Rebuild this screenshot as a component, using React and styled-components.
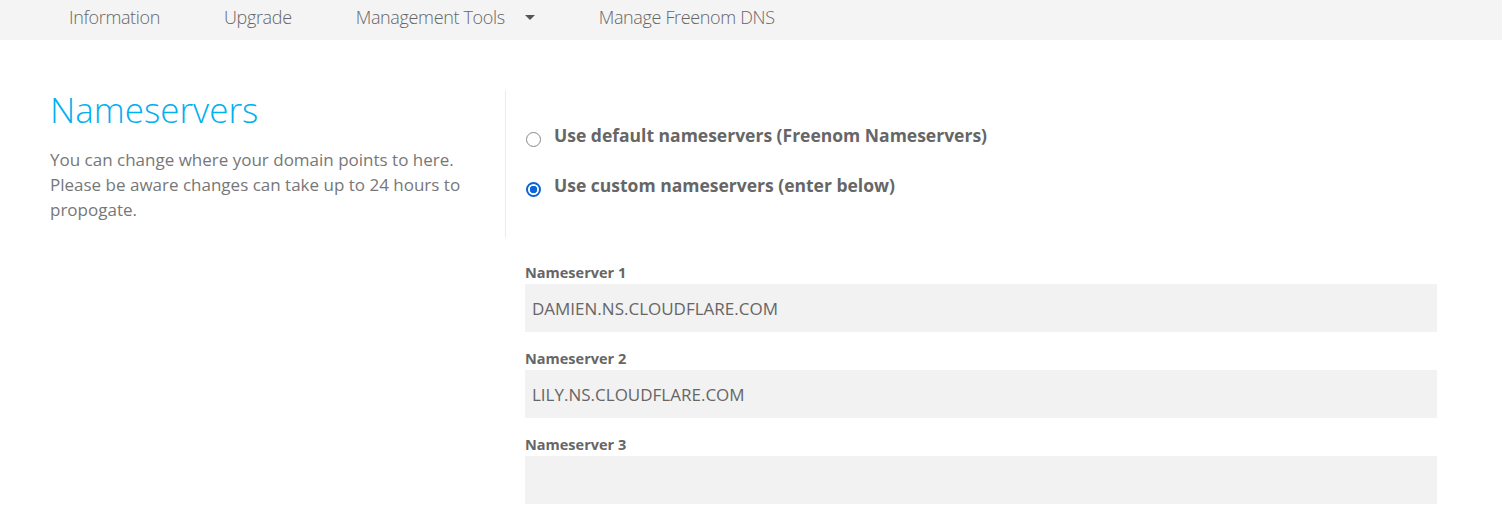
import React, { useState } from 'react';
import styled, { createGlobalStyle } from 'styled-components';

const GlobalStyle = createGlobalStyle`
    body {
        margin : 0;
        background : #fff;
        font-family : "Open Sans", "Liberation Sans", sans-serif;
        color : #666;
    }
`;

const Nav = styled.nav`
    display : flex;
    align-items : center;
    height : 40px;
    padding-left : 37px;
    background-color : #f4f4f4;
`;

const NavItem = styled.div`
    display : flex;
    align-items : center;
    padding : 0 32px;
    font-size : 18px;
    font-weight : 300;
    letter-spacing : -0.35px;
    color : #666;
    line-height : 1;
    margin-top : -7px;
    & : hover {
        cursor : pointer;
    }
`;

const Caret = styled.span`
    display : inline-block;
    margin-left : 20px;
    margin-top : 2px;
    width : 0;
    height : 0;
    border-left : 5px solid transparent;
    border-right : 5px solid transparent;
    border-top : 5px solid #555;
`;

const Page = styled.main`
    display : grid;
    grid-template-columns : 455px 1fr;
    padding : 50px 65px 0 50px;
`;

const Intro = styled.section`
    padding-top : 0;
`;

const Title = styled.h1`
    margin : 0;
    font-size : 35px;
    font-weight : 300;
    line-height : 40px;
    color : #00b0ef;
`;

const Lead = styled.p`
    margin : 17px 0 0;
    font-size : 17px;
    line-height : 25px;
    color : #777;
    max-width : 440px;
`;

const Options = styled.section`
    border-left : 1px solid #ececec;
    padding : 33px 0 41px 20px;
    display : flex;
    flex-direction : column;
    gap : 26px;
`;

const RadioRow = styled.label`
    display : flex;
    align-items : flex-start;
    gap : 13px;
    font-size : 17.5px;
    line-height : 24px;
    font-weight : 700;
    color : #666;
    cursor : pointer;
`;

const Radio = styled.span`
    flex : none;
    box-sizing : border-box;
    width : 15px;
    height : 15px;
    border-radius : 50%;
    margin-top : 9px;
    border : ${props => props.checked ? '2px solid #0b66d6' : '1.5px solid #888'};
    background : ${props => props.checked ? 'radial-gradient(circle, #0b66d6 0 3.5px, #fff 4px)' : '#fff'};
`;

const Fields = styled.section`
    grid-column : 2;
    padding : 25px 0 0 20px;
    display : flex;
    flex-direction : column;
    gap : 17px;
`;

const Field = styled.div`
    display : flex;
    flex-direction : column;
    gap : 1px;
`;

const Label = styled.label`
    font-size : 14.5px;
    font-weight : 700;
    color : #666;
    line-height : 20px;
`;

const Input = styled.input`
    box-sizing : border-box;
    height : 48px;
    border : none;
    outline : none;
    background : #f2f2f2;
    padding : 0 7px;
    font-family : inherit;
    font-size : 17px;
    color : #666;
    text-transform : uppercase;
`;

const navItems = ['Information', 'Upgrade', 'Management Tools', 'Manage Freenom DNS'];

const App = () => {
    const [mode, setMode] = useState('custom');
    const servers = ['damien.ns.cloudflare.com', 'lily.ns.cloudflare.com', ''];

    return <>
        <GlobalStyle />
        <Nav>
            {navItems.map(item =>
                <NavItem key={item}>
                    {item}
                    {item === 'Management Tools' && <Caret />}
                </NavItem>
            )}
        </Nav>
        <Page>
            <Intro>
                <Title>Nameservers</Title>
                <Lead>You can change where your domain points to here. Please be aware changes can take up to 24 hours to propogate.</Lead>
            </Intro>
            <Options>
                <RadioRow onClick={() => setMode('default')}>
                    <Radio checked={mode === 'default'} />
                    Use default nameservers (Freenom Nameservers)
                </RadioRow>
                <RadioRow onClick={() => setMode('custom')}>
                    <Radio checked={mode === 'custom'} />
                    Use custom nameservers (enter below)
                </RadioRow>
            </Options>
            <Fields>
                {servers.map((value, index) =>
                    <Field key={index}>
                        <Label>Nameserver {index + 1}</Label>
                        <Input defaultValue={value} />
                    </Field>
                )}
            </Fields>
        </Page>
    </>;
};

export default App;
